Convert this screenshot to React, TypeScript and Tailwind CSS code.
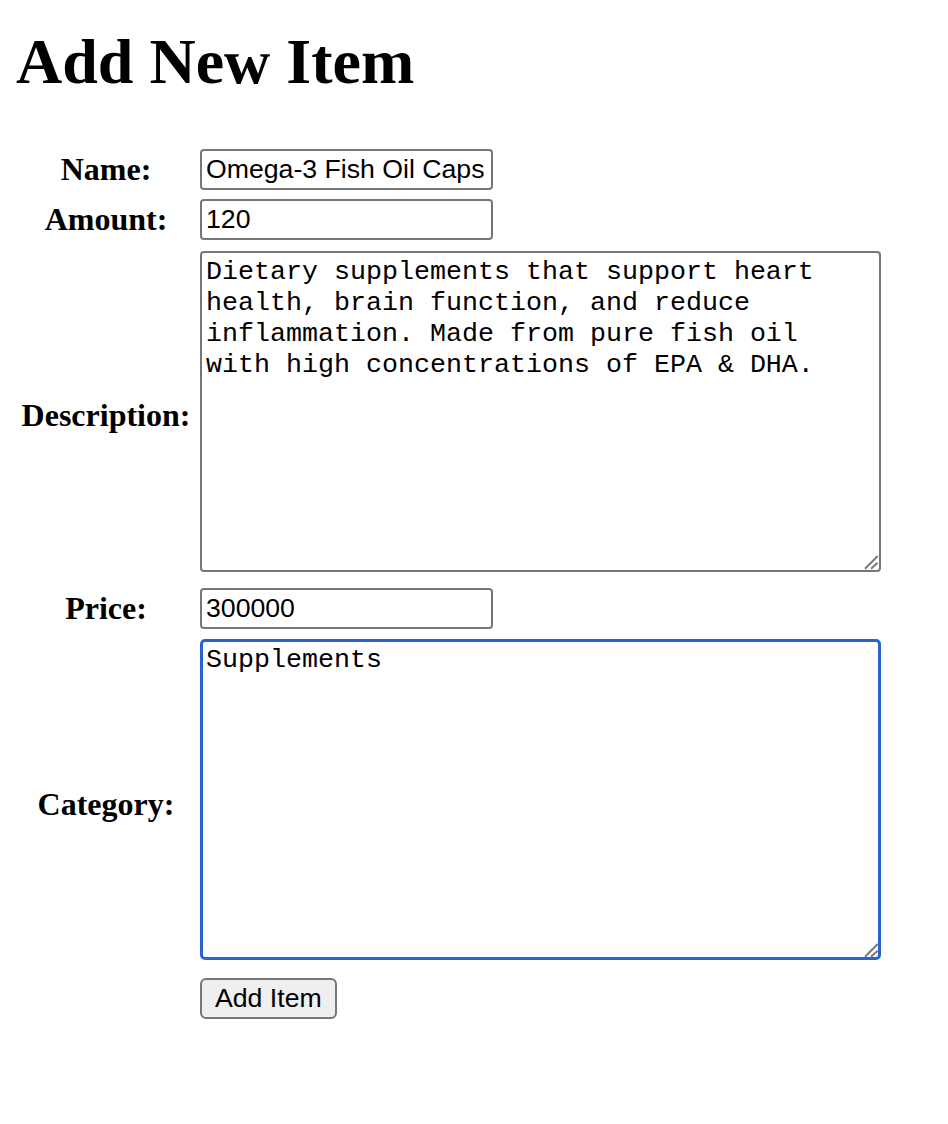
import React from 'react';

const labelCls = "w-[172px] shrink-0 text-center font-['Liberation_Serif',serif] text-[32px] font-bold leading-[37px] text-black";
const inputCls = "ml-[8px] h-[41px] w-[293px] rounded-[4px] border-2 border-[#767676] bg-white px-[4px] font-['Liberation_Sans',Arial,sans-serif] text-[26.667px] leading-[33px] text-black";

const Resizer = () => (
  <svg className="pointer-events-none absolute bottom-0 right-0" width="20" height="20" viewBox="0 0 20 20">
    <path d="M4 16.7 L16.7 4 M10 16.7 L16.7 10.7" stroke="#7a7a7a" strokeWidth="2" fill="none" />
  </svg>
);

const Row = ({
  label,
  children,
  className = '',
  labelClass = '',
}: {
  label: string;
  children: React.ReactNode;
  className?: string;
  labelClass?: string;
}) => (
  <div className={`flex items-center ${className}`}>
    <label className={`${labelCls} ${labelClass}`}>{label}</label>
    {children}
  </div>
);

export default function App() {
  const description =
    'Dietary supplements that support heart health, brain function, and reduce inflammation. Made from pure fish oil with high concentrations of EPA & DHA.';

  return (
    <div className="min-h-screen bg-white px-4 pt-[25px] text-black">
      <h1 className="font-['Liberation_Serif',serif] text-[64px] font-bold leading-[74px]">Add New Item</h1>

      <form className="mt-[50px] pl-[4px]" onSubmit={e => e.preventDefault()}>
        <Row label="Name:">
          <input className={inputCls} defaultValue="Omega-3 Fish Oil Caps" />
        </Row>
        <Row label="Amount:" className="mt-[9px]">
          <input className={inputCls} defaultValue="120" />
        </Row>
        <Row label="Description:" className="mt-[11px]" labelClass="mt-[7px]">
          <div className="relative ml-[8px] h-[321px] w-[681px]">
            <textarea
              className="block h-full w-full resize-none rounded-[4px] border-2 border-[#767676] bg-white p-[4px] font-['Liberation_Mono',monospace] text-[26.667px] leading-[31px] text-black"
              defaultValue={description}
            />
            <Resizer />
          </div>
        </Row>
        <Row label="Price:" className="mt-[16px]">
          <input className={inputCls} defaultValue="300000" />
        </Row>
        <Row label="Category:" className="mt-[10px]" labelClass="mt-[9px]">
          <div className="relative ml-[8px] h-[321px] w-[681px]">
            <textarea
              className="block h-full w-full resize-none rounded-[5px] border-[3px] border-[#2c62d0] bg-white p-[3px] font-['Liberation_Mono',monospace] text-[26.667px] leading-[31px] text-black"
              defaultValue="Supplements"
            />
            <Resizer />
          </div>
        </Row>
        <div className="ml-[180px] mt-[18px]">
          <button
            type="submit"
            className="h-[41px] rounded-[6px] border-2 border-[#767676] bg-[#efefef] px-[13px] font-['Liberation_Sans',Arial,sans-serif] text-[26.667px] leading-[33px] text-black"
          >
            Add Item
          </button>
        </div>
      </form>
    </div>
  );
}
